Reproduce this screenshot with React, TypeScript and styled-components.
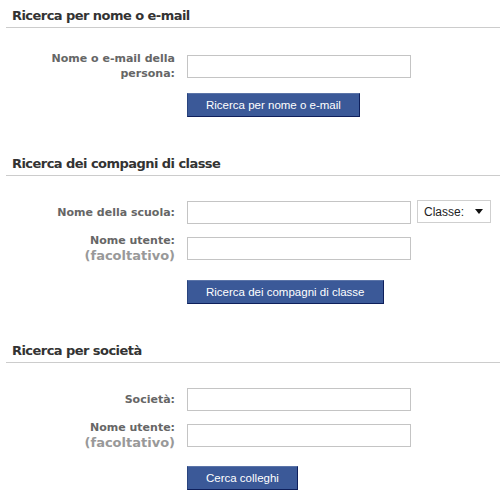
import React from "react";
import styled, { createGlobalStyle } from "styled-components";

const Global = createGlobalStyle`
  html, body { margin: 0; padding: 0; background: #ffffff; }
  body { font-family: "DejaVu Sans", Verdana, sans-serif; color: #333333; }
  * { box-sizing: border-box; }
`;

const Page = styled.div`
  width: 500px;
  padding-top: 8px;
  display: flex;
  flex-direction: column;
  gap: 39px;
`;

const Section = styled.section`
  padding-left: 6px;
`;

const Heading = styled.h2`
  margin: 0;
  padding: 0 0 3px 6px;
  font-family: "DejaVu Sans", Verdana, sans-serif;
  font-size: 13px;
  line-height: 16px;
  letter-spacing: -0.55px;
  font-weight: bold;
  color: #333333;
  border-bottom: 1px solid #cccccc;
`;

const Form = styled.div<{ $top: number }>`
  padding-top: ${(p) => p.$top}px;
  display: flex;
  flex-direction: column;
  gap: 9px;
`;

const Row = styled.div`
  display: grid;
  grid-template-columns: 169px 1fr;
  column-gap: 12px;
  align-items: center;
`;

const Label = styled.label`
  text-align: right;
  font-family: "DejaVu Sans", Verdana, sans-serif;
  font-size: 11px;
  line-height: 15px;
  font-weight: bold;
  color: #666666;
`;

const Optional = styled.span`
  display: block;
  font-size: 13px;
  line-height: 15px;
  color: #999999;
`;

const Field = styled.div`
  display: flex;
  align-items: center;
  gap: 6px;
`;

const TextInput = styled.input`
  width: 224px;
  height: 23px;
  border: 1px solid #c4c4c4;
  background: #ffffff;
  padding: 2px 4px;
  font-family: "Liberation Sans", Arial, sans-serif;
  font-size: 11px;
  outline: none;
`;

const SelectBox = styled.div`
  width: 74px;
  height: 23px;
  border: 1px solid #cfcfcf;
  background: #ffffff;
  display: flex;
  align-items: center;
  justify-content: space-between;
  padding: 0 7px 0 6px;
  font-family: "Liberation Sans", Arial, sans-serif;
  font-size: 12px;
  color: #222222;
  margin-top: -2px;
`;

const ButtonRow = styled.div<{ $space: number }>`
  padding-left: 181px;
  margin-top: ${(p) => p.$space}px;
`;

const Button = styled.button`
  height: 24px;
  padding: 0 18px;
  background: #3b5998;
  color: #ffffff;
  font-family: "Liberation Sans", Arial, sans-serif;
  font-size: 11.5px;
  border: 1px solid;
  border-color: #5b74a8 #0e1f5b #0e1f5b #29447e;
  cursor: pointer;
`;

const Caret = () => (
  <svg width="8" height="5" viewBox="0 0 8 5" aria-hidden="true">
    <path d="M0 0 L8 0 L4 5 Z" fill="#111111" />
  </svg>
);

export default function App() {
  return (
    <>
      <Global />
      <Page>
        <Section>
          <Heading>Ricerca per nome o e-mail</Heading>
          <Form $top={23}>
            <Row>
              <Label>
                Nome o e-mail della
                <br />
                persona:
              </Label>
              <Field>
                <TextInput type="text" />
              </Field>
            </Row>
            <ButtonRow $space={3}>
              <Button>Ricerca per nome o e-mail</Button>
            </ButtonRow>
          </Form>
        </Section>

        <Section>
          <Heading>Ricerca dei compagni di classe</Heading>
          <Form $top={25}>
            <Row>
              <Label>Nome della scuola:</Label>
              <Field>
                <TextInput type="text" />
                <SelectBox>
                  <span>Classe:</span>
                  <Caret />
                </SelectBox>
              </Field>
            </Row>
            <Row>
              <Label>
                Nome utente:
                <Optional>(facoltativo)</Optional>
              </Label>
              <Field>
                <TextInput type="text" />
              </Field>
            </Row>
            <ButtonRow $space={8}>
              <Button>Ricerca dei compagni di classe</Button>
            </ButtonRow>
          </Form>
        </Section>

        <Section>
          <Heading>Ricerca per società</Heading>
          <Form $top={25}>
            <Row>
              <Label>Società:</Label>
              <Field>
                <TextInput type="text" />
              </Field>
            </Row>
            <Row>
              <Label>
                Nome utente:
                <Optional>(facoltativo)</Optional>
              </Label>
              <Field>
                <TextInput type="text" />
              </Field>
            </Row>
            <ButtonRow $space={7}>
              <Button>Cerca colleghi</Button>
            </ButtonRow>
          </Form>
        </Section>
      </Page>
    </>
  );
}
